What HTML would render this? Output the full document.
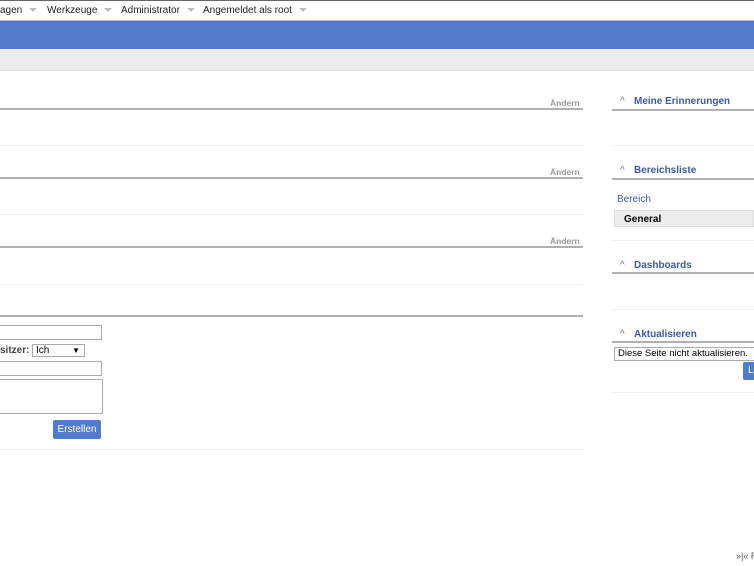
<!DOCTYPE html>
<html><head><meta charset="utf-8"><style>
*{margin:0;padding:0;box-sizing:border-box}
body{width:754px;height:566px;overflow:hidden;background:#fff;font-family:"Liberation Sans",Arial,sans-serif;font-size:11px;color:#000;position:relative}
.a{position:absolute;white-space:nowrap}
.top{left:0;top:0;width:754px;height:21px;border-top:1px solid #666;border-bottom:1px solid #bbb;background:#fff}
.m{top:5px;font-size:10px;color:#222}
.car{display:inline-block;margin-left:7px;width:0;height:0;border-left:4px solid transparent;border-right:4px solid transparent;border-top:4px solid #bbb;vertical-align:middle}
.blue{left:0;top:21px;width:754px;height:28px;background:#527bcb}
.gray{left:0;top:49px;width:754px;height:22px;background:#ececec;border-bottom:1px solid #ddd}
.hl{height:2px;background:#b0b0b0}
.bl{height:1px;background:#f0f0f0}
.and{color:#999;font-weight:bold;font-size:8.5px}
.rh{color:#3b5ba8;font-weight:bold;font-size:10px}
.rh span{position:absolute;left:0;top:0;color:#777;font-size:10px;font-weight:normal}
.inp{border:1px solid #aaa;background:#fff}
</style></head><body>
<div class="a top"></div>
<div class="a m" style="left:0">agen<span class="car"></span></div>
<div class="a m" style="left:47px">Werkzeuge<span class="car"></span></div>
<div class="a m" style="left:121px">Administrator<span class="car"></span></div>
<div class="a m" style="left:203px">Angemeldet als root<span class="car"></span></div>
<div class="a blue"></div>
<div class="a gray"></div>

<div class="a and" style="left:550px;top:98px">Ändern</div>
<div class="a hl" style="left:0;top:108px;width:583px"></div>
<div class="a bl" style="left:0;top:145px;width:583px"></div>
<div class="a and" style="left:550px;top:167px">Ändern</div>
<div class="a hl" style="left:0;top:177px;width:583px"></div>
<div class="a bl" style="left:0;top:214px;width:583px"></div>
<div class="a and" style="left:550px;top:236px">Ändern</div>
<div class="a hl" style="left:0;top:246px;width:583px"></div>
<div class="a bl" style="left:0;top:284px;width:583px"></div>
<div class="a hl" style="left:0;top:315px;width:583px"></div>

<div class="a inp" style="left:-2px;top:325px;width:104px;height:15px"></div>
<div class="a" style="left:0;top:345px;font-size:10px;font-weight:bold;color:#444">sitzer:</div>
<div class="a inp" style="left:32px;top:344px;width:53px;height:13px;font-size:10px;padding-left:3px;line-height:11px">Ich<span style="position:absolute;right:4px;top:0;font-size:8px">▼</span></div>
<div class="a inp" style="left:-2px;top:361px;width:104px;height:15px"></div>
<div class="a inp" style="left:-2px;top:379px;width:105px;height:35px"></div>
<div class="a" style="left:53px;top:420px;width:48px;height:19px;background:#527bcb;color:#fff;border-radius:2px;text-align:center;line-height:19px;font-size:10px">Erstellen</div>
<div class="a bl" style="left:0;top:449px;width:583px"></div>

<div class="a rh" style="left:620px;top:96px;padding-left:14px"><span>^</span>Meine Erinnerungen</div>
<div class="a hl" style="left:612px;top:109px;width:142px"></div>
<div class="a bl" style="left:612px;top:145px;width:142px"></div>
<div class="a rh" style="left:620px;top:165px;padding-left:14px"><span>^</span>Bereichsliste</div>
<div class="a hl" style="left:612px;top:178px;width:142px"></div>
<div class="a" style="left:617px;top:194px;color:#3b5ba8;font-size:10px">Bereich</div>
<div class="a" style="left:614px;top:210px;width:140px;height:17px;background:#ececec;border:1px solid #ddd;font-weight:bold;font-size:10px;padding:3px 0 0 9px">General</div>
<div class="a bl" style="left:612px;top:240px;width:142px"></div>
<div class="a rh" style="left:620px;top:260px;padding-left:14px"><span>^</span>Dashboards</div>
<div class="a hl" style="left:612px;top:272px;width:142px"></div>
<div class="a bl" style="left:612px;top:309px;width:142px"></div>
<div class="a rh" style="left:620px;top:329px;padding-left:14px"><span>^</span>Aktualisieren</div>
<div class="a hl" style="left:612px;top:341px;width:142px"></div>
<div class="a inp" style="left:614px;top:347px;width:150px;height:14px;font-size:9.5px;padding-left:3px;line-height:12px">Diese Seite nicht aktualisieren.</div>
<div class="a" style="left:743px;top:362px;width:20px;height:18px;background:#527bcb;color:#fff;font-size:10px;line-height:18px;padding-left:5px;border-radius:2px">L</div>
<div class="a bl" style="left:612px;top:392px;width:142px"></div>

<div class="a" style="left:736px;top:551px;font-size:9px;color:#555">»|« R</div>
</body></html>
